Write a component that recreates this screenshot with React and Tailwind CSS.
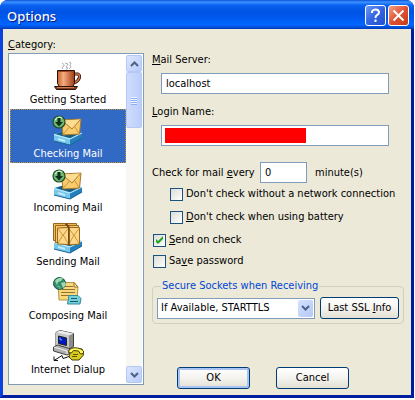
import { useState } from 'react';

const CoffeeIcon = () => (
  <svg width="32" height="32" viewBox="0 0 32 32">
    <defs>
      <linearGradient id="cup" x1="0" x2="1">
        <stop offset="0" stopColor="#c8602c" />
        <stop offset="0.35" stopColor="#f4ac80" />
        <stop offset="1" stopColor="#a03c14" />
      </linearGradient>
    </defs>
    <path d="M10 3l2 1.500 0 1.500-2 1.500 1 1.500M13 3l3 1-2 3 2 1-2 1.500M17 2l2 1-1 2 1 2-2 2" fill="none" stroke="#9c9c9c" strokeWidth="0.8" />
    <path d="M23 14h3q2 1 1.500 3.500-1 3.500-5.500 5.500" fill="none" stroke="#2a1208" strokeWidth="3" />
    <path d="M23 14h3q2 1 1.500 3.500-1 3.500-5.500 5.500" fill="none" stroke="#d8784c" strokeWidth="1.400" />
    <path d="M5.500 10.500h17v13l-2 3.500h-13l-2-3.500z" fill="url(#cup)" stroke="#2a1208" />
    <path d="M6 11.500h16" stroke="#a04824" />
    <path d="M2.500 26.500h23l-2 3h-19z" fill="#843c20" stroke="#2a1208" />
    <path d="M5 27.500h17" stroke="#d87c50" />
  </svg>
);

const Tray = () => (
  <g>
    <path d="M2 20l10-3 18 2v5l-12 7-16-4z" fill="#3c9cd0" />
    <path d="M4 20l9-3 16 2-11 5z" fill="#185c80" />
    <path d="M2 20l16 5v6L2 27z" fill="#78c8ec" />
    <path d="M18 25l12-6v5l-12 7z" fill="#2480bc" />
    <path d="M2 20.500l16 4.500 12-6" fill="none" stroke="#d0f0ff" />
    <path d="M2 27l16 4 12-7" fill="none" stroke="#1c6494" />
    <path d="M6 24l7 2v2l-7-2z" fill="#c0ecfc" />
  </g>
);

const MailInIcon = () => (
  <svg width="32" height="32" viewBox="0 0 32 32">
    <Tray />
    <path d="M9.500 6l19.500-1-1.500 15-16.500 1z" fill="#f8cc6c" stroke="#a8782c" />
    <path d="M11 20.500l6-7M27 19.500l-4-6.500" fill="none" stroke="#c89440" />
    <path d="M10 6.500l10 8.500 8.500-9.500" fill="#fcdc90" stroke="#b07c2c" />
    <circle cx="7" cy="8" r="6" fill="#6fb873" stroke="#1e4c2a" strokeWidth="1.200" />
    <path d="M3 6q3-4 7-2" fill="none" stroke="#c0ecc0" strokeWidth="1.500" />
    <path d="M5.500 4h3v4H11l-4 4.500L3 8h2.500z" fill="#10301c" />
  </svg>
);

const SendingIcon = () => (
  <svg width="32" height="32" viewBox="0 0 32 32">
    <Tray />
    <path d="M1.500 1.500h12v17h-12zM13.500 1.500h11v17h-11z" fill="#f0b858" stroke="#98681c" />
    <path d="M3.500 3.500h12v17h-12zM15.500 3.500h11v17h-11z" fill="#f6c870" stroke="#98681c" />
    <path d="M5.500 6l11-.5v17l-11-.5zM16.500 5.500h11V22l-11 1z" fill="#fcd888" stroke="#98681c" />
    <path d="M6 6.500l5 7 5-7M6 21.500l5-9 5 9M17 6.500l5 7 5-7M17 22l5-9 5 8.500" fill="none" stroke="#cc983c" />
    <path d="M14 1.500l3 4V23" fill="none" stroke="#6c4010" strokeWidth="1.500" />
  </svg>
);

const ComposingIcon = () => (
  <svg width="32" height="32" viewBox="0 0 32 32">
    <path d="M6 6.500h16l4 4.500-1 13H7z" fill="#f8d878" stroke="#b8944c" />
    <path d="M22 6.500V11h4z" fill="#fff0b8" stroke="#94702c" />
    <path d="M13 10.500h8M10 13.500h13M9 16.500h14M9 19.500h13" stroke="#947034" />
    <path d="M17 19.500h9l3 3-1 5.500H15.500z" fill="#74d0dc" stroke="#348c9c" />
    <path d="M19 22.500h6M18 25.500h8" stroke="#185868" />
    <circle cx="7.500" cy="7.500" r="6" fill="#348c6c" stroke="#1e5444" />
    <path d="M3 5q3-4 8-3l-2 3-3 1-1 3zM9 7l4-1 1 3-3 3z" fill="#a0dcb0" />
    <path d="M5 10l3 1v2" stroke="#7cc8a0" fill="none" />
  </svg>
);

const DialupIcon = () => (
  <svg width="32" height="32" viewBox="0 0 32 32">
    <path d="M4 2.500l4-2 13.500 3v13l-4.500 3L4 16z" fill="#8c8c8c" stroke="#404040" />
    <path d="M4 2.500l13 3V19L4 16z" fill="#c8c8c8" />
    <path d="M4 2.500l4-2 13.500 3-4.500 2z" fill="#ececec" />
    <path d="M6.500 6l8 2v7.500l-8-2z" fill="#0018c0" stroke="#202020" />
    <path d="M8 7.500v2l2 .5" fill="none" stroke="#60c0ff" />
    <path d="M1.500 17l4-2 13.500 4v4l-4 2L1.500 21z" fill="#b0b0b0" stroke="#404040" />
    <path d="M2 17l13 4v3" fill="none" stroke="#f0f0f0" />
    <path d="M18 23l4-4h8l1.500 6-4.500 5h-7l-3-3z" fill="#d8cc20" stroke="#404000" />
    <path d="M17 20q4-4 12-1l2.500 2v2.500l-3 .5-2-3-5-.5-2 2.500-3-.5z" fill="#fff45c" stroke="#404000" />
    <path d="M21 24.500h5M20 26.500h5" stroke="#605800" />
    <path d="M17 26.500l-6 2-1-3-8 5m0-4v4h4" fill="none" stroke="#101010" />
  </svg>
);

const CATEGORIES = [
  { label: 'Getting Started', icon: CoffeeIcon },
  { label: 'Checking Mail', icon: MailInIcon },
  { label: 'Incoming Mail', icon: MailInIcon },
  { label: 'Sending Mail', icon: SendingIcon },
  { label: 'Composing Mail', icon: ComposingIcon },
  { label: 'Internet Dialup', icon: DialupIcon },
];

const Chevron = ({ up = false }) => (
  <svg width="9" height="6" viewBox="0 0 9 6" className={up ? 'rotate-180' : ''}>
    <path d="M1 1l3.500 3.500L8 1" fill="none" stroke="#4d6185" strokeWidth="2" />
  </svg>
);

const ScrollButton = ({ up = false, label }) => (
  <button
    aria-label={label}
    className="flex h-[17px] w-4 items-center justify-center rounded-xs border border-[#b4c8f6] bg-gradient-to-br from-[#dce6ff] to-[#b8cbf8]"
  >
    <Chevron up={up} />
  </button>
);

const CheckBox = ({ checked = false, children }) => (
  <label className="flex h-4 items-center gap-[3px] whitespace-nowrap">
    <span className="relative h-[13px] w-[13px] shrink-0">
      <input
        type="checkbox"
        defaultChecked={checked}
        className="peer block h-[13px] w-[13px] appearance-none border border-[#1c5180] bg-gradient-to-br from-[#dcdcd7] to-white"
      />
      <svg
        viewBox="0 0 13 13"
        className="pointer-events-none absolute inset-0 hidden peer-checked:block"
      >
        <path d="M3 5v3l2 2 5-5V2L5 7z" fill="#21a121" />
      </svg>
    </span>
    <span>{children}</span>
  </label>
);

const FIELD = 'h-[21px] border border-[#7f9db9] bg-white px-1 outline-none';
const BUTTON =
  'h-[22px] rounded-[3px] border border-[#003c74] bg-gradient-to-b from-white via-[#f4f3ee] to-[#e3dfd3] whitespace-nowrap';

const App = () => {
  const [selected, setSelected] = useState(1);

  return (
    <div className="mr-px overflow-hidden rounded-t-lg bg-[#0831d9] font-['DejaVu_Sans_Condensed','DejaVu_Sans',sans-serif] text-[11px] leading-4 text-black">
      {/* Title bar */}
      <header className="flex h-[29px] items-center gap-0.5 bg-[linear-gradient(#0a50d8_0%,#3c94ff_7%,#0a60f0_18%,#0054e3_40%,#0058ee_60%,#0066ff_85%,#0050d8_94%,#0038b8_100%)] pr-[5px] pl-[7px]">
        <h1 className="flex-1 pt-0.5 font-['Noto_Sans',sans-serif] text-[13px] font-medium text-white [text-shadow:1px_1px_#0a1883]">
          Options
        </h1>
        <button
          aria-label="Help"
          className="mt-0.5 flex h-[21px] w-[21px] items-center justify-center rounded-[3px] border border-white bg-gradient-to-br from-[#6c98f4] via-[#3464e0] to-[#2050d0]"
        >
          <svg width="15" height="15" viewBox="0 0 15 15" fill="none" stroke="#fff" strokeWidth="2">
            <path d="M4 5V3.500Q5 1.500 7.500 1.500 11 1.500 11 4.500 11 6 9 7 7.500 8 7.500 10" />
            <path d="M7.500 11.500v2.500" />
          </svg>
        </button>
        <button
          aria-label="Close"
          className="mt-0.5 flex h-[21px] w-[21px] items-center justify-center rounded-[3px] border border-white bg-gradient-to-br from-[#f0a088] via-[#e05030] to-[#c83c18]"
        >
          <svg width="15" height="15" viewBox="0 0 15 15" fill="none" stroke="#fff" strokeWidth="2">
            <path d="M2.500 2.500l10 10M12.500 2.500l-10 10" />
          </svg>
        </button>
      </header>

      <main className="flex gap-2 border-x-3 border-b-3 border-l-[#0842e0] border-r-[#001ea0] border-b-[#001ea0] bg-[#ece9d8] pr-[7px] pl-[5px]">
        {/* Category list */}
        <section className="flex w-[136px] shrink-0 flex-col pt-2 pb-2.5">
          <h2 id="category">
            <u>C</u>ategory:
          </h2>
          <div className="flex flex-1 border border-[#7f9db9] bg-white p-px">
            <ul aria-labelledby="category" className="flex-1 pb-1">
              {CATEGORIES.map(({ label, icon: Icon }, i) => (
                <li key={label}>
                  <button
                    onClick={() => setSelected(i)}
                    className={`flex h-[54px] w-full flex-col items-center border border-dotted pt-1 whitespace-nowrap ${
                      i === selected
                        ? 'border-[#c8903c] bg-[#316ac5] text-white'
                        : 'border-transparent'
                    }`}
                  >
                    <Icon />
                    <span>{label}</span>
                  </button>
                </li>
              ))}
            </ul>
            <div className="flex w-4 flex-col bg-[#f8f7f2]">
              <ScrollButton up label="Scroll up" />
              <div className="flex h-14 flex-col items-center justify-center gap-px rounded-xs border border-[#b4c8f6] bg-gradient-to-r from-[#cfdcff] to-[#bccdfa]">
                {[0, 1, 2, 3].map((n) => (
                  <span key={n} className="h-px w-1.5 bg-[#eef4fe] shadow-[0_1px_#8cb0f8]" />
                ))}
              </div>
              <div className="flex-1" />
              <ScrollButton label="Scroll down" />
            </div>
          </div>
        </section>

        {/* Checking Mail settings */}
        <form className="flex min-w-0 flex-1 flex-col pt-[23px]" onSubmit={(e) => e.preventDefault()}>
          <label htmlFor="server">
            <u>M</u>ail Server:
          </label>
          <input id="server" defaultValue="localhost" className={`mt-[5px] mr-[15px] ml-[9px] ${FIELD}`} />

          <label htmlFor="login" className="mt-2.5">
            <u>L</u>ogin Name:
          </label>
          <div className="relative mt-[5px] mr-[15px] ml-[9px] flex">
            <input id="login" className={`w-full ${FIELD}`} />
            <span className="pointer-events-none absolute top-[3px] left-1 h-[15px] w-[141px] bg-[#ff0000]" />
          </div>

          <div className="mt-4 flex items-center gap-2">
            <label htmlFor="minutes" className="w-[100px] whitespace-nowrap">
              Check for mail <u>e</u>very
            </label>
            <input id="minutes" defaultValue="0" className={`w-[47px] ${FIELD}`} />
            <span>minute(s)</span>
          </div>

          <div className="mt-[3px] flex flex-col gap-[7px] pl-[18px]">
            <CheckBox>Don't check without a network connection</CheckBox>
            <CheckBox>
              <u>D</u>on't check when using battery
            </CheckBox>
          </div>
          <div className="mt-[7px] flex flex-col gap-[5px] pl-px">
            <CheckBox checked>
              <u>S</u>end on check
            </CheckBox>
            <CheckBox>
              Sa<u>v</u>e password
            </CheckBox>
          </div>

          <fieldset className="mt-[9px] min-w-0 rounded border border-[#d0d0bf] px-1 pt-[3px] pb-1">
            <legend className="ml-1 px-px text-[#0046d5]">Secure Sockets when Receiving</legend>
            <div className="flex items-center gap-[5px]">
              <div className="relative flex min-w-0 flex-1">
                <select
                  aria-label="Secure Sockets when Receiving"
                  className="h-[21px] w-full appearance-none border border-[#7f9db9] bg-white px-[3px] outline-none"
                >
                  <option>If Available, STARTTLS</option>
                </select>
                <span className="pointer-events-none absolute top-0.5 right-0.5 flex h-[17px] w-[15px] items-center justify-center rounded-xs bg-gradient-to-br from-[#d4e0ff] to-[#b4c8f6]">
                  <Chevron />
                </span>
              </div>
              <button type="button" className={`w-[79px] ${BUTTON}`}>
                Last SSL <u>I</u>nfo
              </button>
            </div>
          </fieldset>

          <div className="mt-[43px] flex gap-[26px] pl-[25px]">
            <button className={`w-[73px] shadow-[inset_0_0_0_2px_#a8c4f4] ${BUTTON}`}>OK</button>
            <button type="button" className={`w-[73px] ${BUTTON}`}>
              Cancel
            </button>
          </div>
        </form>
      </main>
    </div>
  );
};

export default App;
